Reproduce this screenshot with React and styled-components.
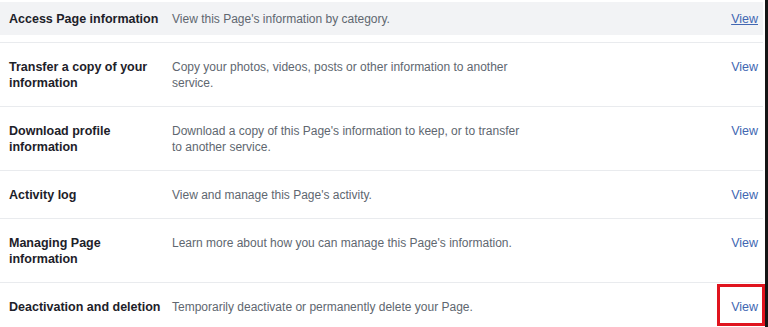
import styled, { createGlobalStyle } from "styled-components"

const GlobalStyle = createGlobalStyle`
    html, body {
        margin: 0;
        padding: 0;
        background: #fff;
    }
    body {
        font-family: "Liberation Sans", Arial, Helvetica, sans-serif;
        overflow: hidden;
    }
`
const Frame = styled.div`
    width: 768px;
    height: 327px;
    box-sizing: border-box;
    padding-right: 2px;
    border-right: 3px solid #151515;
    overflow: hidden;
`
const List = styled.div`
    display: flex;
    flex-direction: column;
`
const Row = styled.div`
    display: flex;
    align-items: flex-start;
    padding: ${p => p.$active ? "8.5px 5px 8.5px 9px" : "15.5px 5px 15.5px 9px"};
    margin: ${p => p.$active ? "2px 0 7px" : "0"};
    background: ${p => p.$active ? "#f2f3f5" : "transparent"};
    border-top: ${p => p.$active ? "none" : "1px solid #e9ebee"};
    font-size: 12px;
    line-height: 16px;
`
const Title = styled.div`
    width: 163px;
    flex-shrink: 0;
    font-weight: bold;
    font-size: 12.5px;
    color: #1d2129;
    padding-right: 4px;
    box-sizing: border-box;
`
const Desc = styled.div`
    flex: 1;
    color: #606770;
    padding-right: 200px;
`
const LinkCell = styled.div`
    position: relative;
    flex-shrink: 0;
`
const ViewLink = styled.a`
    color: #4267b2;
    text-decoration: ${p => p.$hover ? "underline" : "none"};
    font-size: 12.5px;
    cursor: pointer;
`
const Marker = styled.div`
    position: absolute;
    left: -14px;
    right: -7px;
    top: -15px;
    bottom: -11px;
    border: 3px solid #e0141e;
`

const rows = [
    { title: "Access Page information", desc: "View this Page's information by category.", active: true },
    { title: "Transfer a copy of your information", desc: "Copy your photos, videos, posts or other information to another service." },
    { title: "Download profile information", desc: "Download a copy of this Page's information to keep, or to transfer to another service." },
    { title: "Activity log", desc: "View and manage this Page's activity." },
    { title: "Managing Page information", desc: "Learn more about how you can manage this Page's information." },
    { title: "Deactivation and deletion", desc: "Temporarily deactivate or permanently delete your Page.", marked: true },
]

const App = () => {
    return (
        <Frame>
            <GlobalStyle />
            <List>
                {rows.map(r => (
                    <Row key={r.title} $active={r.active}>
                        <Title>{r.title}</Title>
                        <Desc>{r.desc}</Desc>
                        <LinkCell>
                            <ViewLink $hover={r.active}>View</ViewLink>
                            {r.marked && <Marker />}
                        </LinkCell>
                    </Row>
                ))}
            </List>
        </Frame>
    )
}

export default App
